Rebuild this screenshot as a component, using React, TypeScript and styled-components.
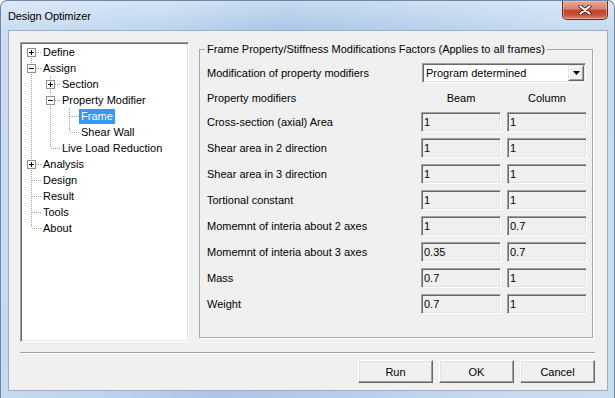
import * as React from "react"
import styled, { createGlobalStyle } from "styled-components"

const GlobalStyle = createGlobalStyle`
  html, body {
    margin: 0;
    padding: 0;
    background: #ffffff;
  }
  body {
    font-family: "Liberation Sans", Arial, sans-serif;
    font-size: 11px;
    color: #000;
  }
`

const Window = styled.div`
  box-sizing: border-box;
  width: 615px;
  height: 398px;
  display: flex;
  flex-direction: column;
  border: 1px solid #6d87a6;
  border-bottom: none;
  border-radius: 7px 7px 0 0;
  padding: 0 6px 0 7px;
  background: linear-gradient(
      180deg,
      rgba(255, 255, 255, 0.35) 0px,
      rgba(255, 255, 255, 0) 30px
    ),
    linear-gradient(
      100deg,
      #cbdef2 0%,
      #bcd4ee 25%,
      #a9c6e7 42%,
      #b3cdea 58%,
      #c4d9f0 80%,
      #cadef2 100%
    );
`

const TitleBar = styled.div`
  height: 29px;
  display: flex;
  align-items: flex-start;
  flex-shrink: 0;
`

const Title = styled.div`
  font-family: "Liberation Sans", Arial, sans-serif;
  font-size: 11px;
  letter-spacing: -0.1px;
  line-height: 14px;
  margin-top: 8px;
  color: #000;
`

const CloseButton = styled.div`
  box-sizing: border-box;
  margin-left: auto;
  width: 46px;
  height: 19px;
  display: flex;
  align-items: center;
  justify-content: center;
  border: 1px solid #6b2b22;
  border-top: none;
  border-radius: 0 0 5px 5px;
  background: linear-gradient(
    180deg,
    #e9a89a 0%,
    #d9806d 45%,
    #c5412c 52%,
    #c8503a 78%,
    #dc8a72 100%
  );
  box-shadow: inset 0 0 0 1px rgba(255, 210, 200, 0.45);
`

const Client = styled.div`
  flex: 1;
  display: flex;
  flex-direction: column;
  border: 1px solid #9daec3;
  background: #f0f0f0;
  padding: 11px 12px 0 11px;
  margin-bottom: 7px;
`

const Main = styled.div`
  display: flex;
  height: 300px;
`

const sunken = `
  border: 1px solid;
  border-color: #a0a0a0 #ffffff #ffffff #a0a0a0;
  box-shadow: inset 1px 1px 0 #696969, inset -1px -1px 0 #e3e3e3;
`

const TreeBox = styled.div`
  box-sizing: border-box;
  width: 169px;
  flex-shrink: 0;
  background: #fff;
  ${sunken};
  padding: 1px;
`

const TreeRow = styled.div`
  display: flex;
  align-items: center;
  height: 16px;
`

const TreeLabel = styled.span<{ $selected?: boolean }>`
  line-height: 15px;
  padding: 0 2px;
  white-space: nowrap;
  background: ${p => (p.$selected ? "#3399ff" : "transparent")};
  color: ${p => (p.$selected ? "#fff" : "#000")};
`

const GroupBox = styled.fieldset`
  flex: 1;
  min-width: 0;
  margin: 1px 2px 4px 10px;
  padding: 7px 5px 0 7px;
  border: 1px solid #a7a7a7;
  box-shadow: 1px 1px 0 #fff;
`

const Legend = styled.legend`
  padding: 0 2px;
  margin-left: -2px;
  line-height: 13px;
  font-size: 11px;
`

const FormGrid = styled.div`
  display: grid;
  grid-template-columns: 1fr 80px 80px;
  grid-template-rows: 20px 17px repeat(8, 20px);
  column-gap: 6px;
  row-gap: 6px;
  align-items: center;
`

const Label = styled.div`
  white-space: nowrap;
`

const Header = styled.div`
  text-align: center;
`

const Field = styled.input`
  box-sizing: border-box;
  width: 80px;
  height: 20px;
  margin: 0;
  padding: 0 0 0 2px;
  font-family: "Liberation Sans", Arial, sans-serif;
  font-size: 11px;
  color: #000;
  background: #f0f0f0;
  outline: none;
  ${sunken};
`

const Combo = styled.div`
  grid-column: 2 / span 2;
  box-sizing: border-box;
  height: 20px;
  margin: 0 1px;
  display: flex;
  align-items: center;
  background: #fff;
  ${sunken};
  padding: 1px;
`

const ComboText = styled.div`
  flex: 1;
  padding-left: 2px;
`

const ComboArrow = styled.div`
  box-sizing: border-box;
  width: 16px;
  height: 16px;
  display: flex;
  align-items: center;
  justify-content: center;
  background: #f0f0f0;
  border: 1px solid;
  border-color: #e3e3e3 #696969 #696969 #e3e3e3;
  box-shadow: inset 1px 1px 0 #fff, inset -1px -1px 0 #a0a0a0;
`

const Separator = styled.div`
  margin-top: 10px;
  height: 1px;
  background: #a0a0a0;
  border-bottom: 1px solid #fff;
`

const ButtonRow = styled.div`
  display: flex;
  justify-content: flex-end;
  gap: 6px;
  margin-top: 6px;
`

const Button = styled.button`
  box-sizing: border-box;
  width: 75px;
  height: 23px;
  margin: 0;
  padding: 0;
  font-family: "Liberation Sans", Arial, sans-serif;
  font-size: 11px;
  color: #000;
  background: #f0f0f0;
  border: 1px solid;
  border-color: #ffffff #696969 #696969 #ffffff;
  box-shadow: inset -1px -1px 0 #a0a0a0, inset 1px 1px 0 #e3e3e3;
`

type Node = {
  label: string
  open?: boolean
  selected?: boolean
  children?: Node[]
}

const tree: Node[] = [
  { label: "Define", children: [{ label: "" }] },
  {
    label: "Assign",
    open: true,
    children: [
      { label: "Section", children: [{ label: "" }] },
      {
        label: "Property Modifier",
        open: true,
        children: [{ label: "Frame", selected: true }, { label: "Shear Wall" }],
      },
      { label: "Live Load Reduction" },
    ],
  },
  { label: "Analysis", children: [{ label: "" }] },
  { label: "Design" },
  { label: "Result" },
  { label: "Tools" },
  { label: "About" },
]

type Row = {
  node: Node
  guides: boolean[]
  first: boolean
  last: boolean
  depth: number
}

function flatten(nodes: Node[], guides: boolean[], rows: Row[]) {
  nodes.forEach((node, i) => {
    const last = i === nodes.length - 1
    rows.push({ node, guides, first: guides.length === 0 && i === 0, last, depth: guides.length })
    if (node.open && node.children) {
      flatten(node.children, [...guides, !last], rows)
    }
  })
  return rows
}

const DOT = "#a0a0a0"

const Guide = ({ line }: { line: boolean }) => (
  <svg width="19" height="16" style={{ flexShrink: 0 }}>
    {line && <line x1="9.5" y1="0" x2="9.5" y2="16" stroke={DOT} strokeDasharray="1 1" />}
  </svg>
)

const Elbow = ({ row }: { row: Row }) => {
  const hasKids = !!row.node.children
  const top = row.first ? 8 : 0
  const bottom = row.last ? 8 : 16
  return (
    <svg width="19" height="16" style={{ flexShrink: 0 }}>
      <line x1="9.5" y1={top} x2="9.5" y2={bottom} stroke={DOT} strokeDasharray="1 1" />
      <line x1="10" y1="8.5" x2="19" y2="8.5" stroke={DOT} strokeDasharray="1 1" />
      {hasKids && (
        <>
          <rect x="5.5" y="4.5" width="8" height="8" fill="#fff" stroke="#919191" />
          <line x1="7" y1="8.5" x2="12" y2="8.5" stroke="#000" />
          {!row.node.open && <line x1="9.5" y1="6" x2="9.5" y2="11" stroke="#000" />}
        </>
      )}
    </svg>
  )
}

const rows = [
  { label: "Cross-section (axial) Area", beam: "1", column: "1" },
  { label: "Shear area in 2 direction", beam: "1", column: "1" },
  { label: "Shear area in 3 direction", beam: "1", column: "1" },
  { label: "Tortional constant", beam: "1", column: "1" },
  { label: "Momemnt of interia about 2 axes", beam: "1", column: "0.7" },
  { label: "Momemnt of interia about 3 axes", beam: "0.35", column: "0.7" },
  { label: "Mass", beam: "0.7", column: "1" },
  { label: "Weight", beam: "0.7", column: "1" },
]

export default function App() {
  const treeRows = flatten(tree, [], [])
  return (
    <>
      <GlobalStyle />
      <Window>
        <TitleBar>
          <Title>Design Optimizer</Title>
          <CloseButton>
            <svg width="14" height="10" viewBox="0 0 14 10">
              <path d="M2.5 1.5 L11.5 8.5 M11.5 1.5 L2.5 8.5" stroke="#5a2119" strokeWidth="4" strokeLinecap="round" />
              <path d="M2.5 1.5 L11.5 8.5 M11.5 1.5 L2.5 8.5" stroke="#fff" strokeWidth="2.2" strokeLinecap="round" />
            </svg>
          </CloseButton>
        </TitleBar>
        <Client>
          <Main>
            <TreeBox>
              {treeRows.map((r, i) => (
                <TreeRow key={i}>
                  {r.guides.map((g, j) => (
                    <Guide key={j} line={g} />
                  ))}
                  <Elbow row={r} />
                  <TreeLabel $selected={r.node.selected}>{r.node.label}</TreeLabel>
                </TreeRow>
              ))}
            </TreeBox>
            <GroupBox>
              <Legend>Frame Property/Stiffness Modifications Factors (Applies to all frames)</Legend>
              <FormGrid>
                <Label>Modification of property modifiers</Label>
                <Combo>
                  <ComboText>Program determined</ComboText>
                  <ComboArrow>
                    <svg width="7" height="4" viewBox="0 0 7 4">
                      <path d="M0 0h7l-3.5 4z" fill="#000" />
                    </svg>
                  </ComboArrow>
                </Combo>
                <Label>Property modifiers</Label>
                <Header>Beam</Header>
                <Header>Column</Header>
                {rows.map(r => (
                  <React.Fragment key={r.label}>
                    <Label>{r.label}</Label>
                    <Field readOnly defaultValue={r.beam} />
                    <Field readOnly defaultValue={r.column} />
                  </React.Fragment>
                ))}
              </FormGrid>
            </GroupBox>
          </Main>
          <Separator />
          <ButtonRow>
            <Button>Run</Button>
            <Button>OK</Button>
            <Button>Cancel</Button>
          </ButtonRow>
        </Client>
      </Window>
    </>
  )
}
